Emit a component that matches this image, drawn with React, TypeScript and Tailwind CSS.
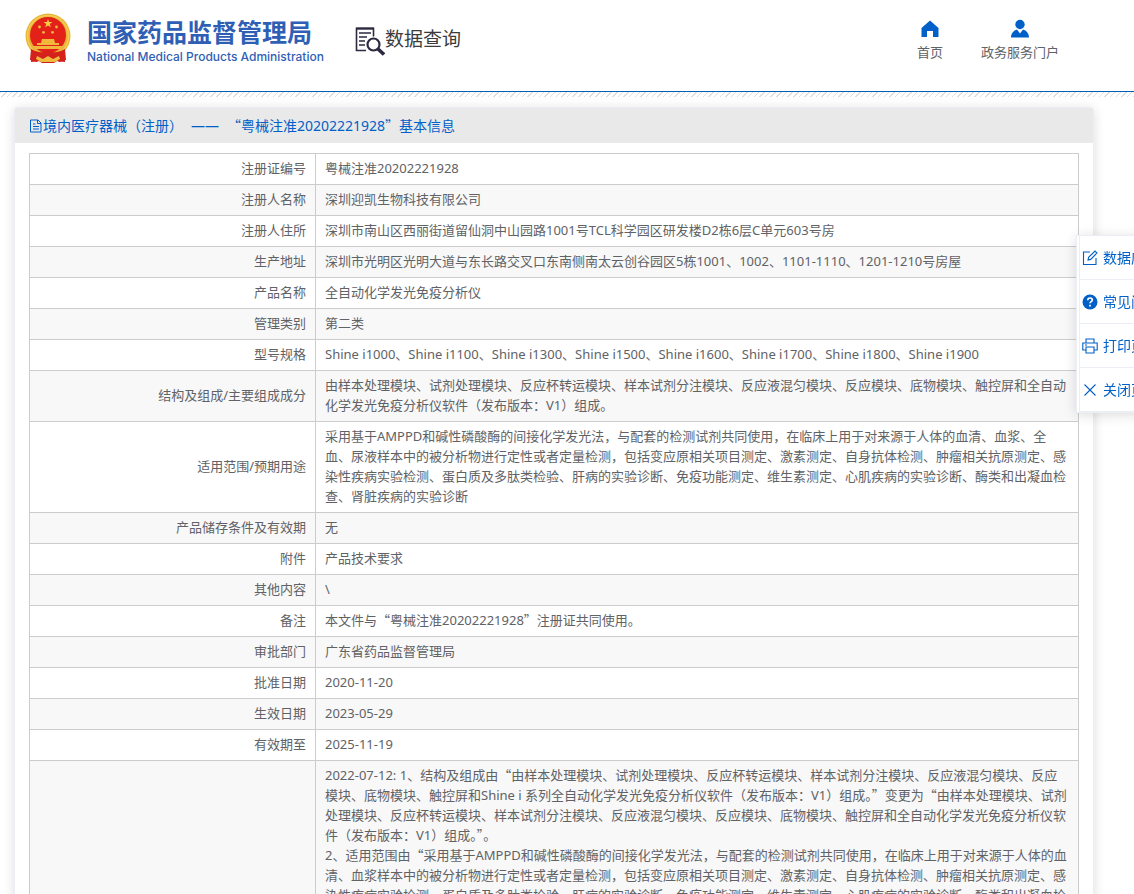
import type { ReactNode } from "react";

type Row = { label: string; value: string[] };

const SCOPE =
  "采用基于AMPPD和碱性磷酸酶的间接化学发光法，与配套的检测试剂共同使用，在临床上用于对来源于人体的血清、血浆、全血、尿液样本中的被分析物进行定性或者定量检测，包括变应原相关项目测定、激素测定、自身抗体检测、肿瘤相关抗原测定、感染性疾病实验检测、蛋白质及多肽类检验、肝病的实验诊断、免疫功能测定、维生素测定、心肌疾病的实验诊断、酶类和出凝血检查、肾脏疾病的实验诊断";

const ROWS: Row[] = [
  { label: "注册证编号", value: ["粤械注准20202221928"] },
  { label: "注册人名称", value: ["深圳迎凯生物科技有限公司"] },
  {
    label: "注册人住所",
    value: ["深圳市南山区西丽街道留仙洞中山园路1001号TCL科学园区研发楼D2栋6层C单元603号房"],
  },
  {
    label: "生产地址",
    value: ["深圳市光明区光明大道与东长路交叉口东南侧南太云创谷园区5栋1001、1002、1101-1110、1201-1210号房屋"],
  },
  { label: "产品名称", value: ["全自动化学发光免疫分析仪"] },
  { label: "管理类别", value: ["第二类"] },
  {
    label: "型号规格",
    value: [
      "Shine i1000、Shine i1100、Shine i1300、Shine i1500、Shine i1600、Shine i1700、Shine i1800、Shine i1900",
    ],
  },
  {
    label: "结构及组成/主要组成成分",
    value: [
      "由样本处理模块、试剂处理模块、反应杯转运模块、样本试剂分注模块、反应液混匀模块、反应模块、底物模块、触控屏和全自动化学发光免疫分析仪软件（发布版本：V1）组成。",
    ],
  },
  { label: "适用范围/预期用途", value: [SCOPE] },
  { label: "产品储存条件及有效期", value: ["无"] },
  { label: "附件", value: ["产品技术要求"] },
  { label: "其他内容", value: ["\\"] },
  { label: "备注", value: ["本文件与“粤械注准20202221928”注册证共同使用。"] },
  { label: "审批部门", value: ["广东省药品监督管理局"] },
  { label: "批准日期", value: ["2020-11-20"] },
  { label: "生效日期", value: ["2023-05-29"] },
  { label: "有效期至", value: ["2025-11-19"] },
  {
    label: "变更情况",
    value: [
      "2022-07-12: 1、结构及组成由“由样本处理模块、试剂处理模块、反应杯转运模块、样本试剂分注模块、反应液混匀模块、反应模块、底物模块、触控屏和Shine i 系列全自动化学发光免疫分析仪软件（发布版本：V1）组成。”变更为“由样本处理模块、试剂处理模块、反应杯转运模块、样本试剂分注模块、反应液混匀模块、反应模块、底物模块、触控屏和全自动化学发光免疫分析仪软件（发布版本：V1）组成。”。",
      "2、适用范围由“采用基于AMPPD和碱性磷酸酶的间接化学发光法，与配套的检测试剂共同使用，在临床上用于对来源于人体的血清、血浆样本中的被分析物进行定性或者定量检测，包括变应原相关项目测定、激素测定、自身抗体检测、肿瘤相关抗原测定、感染性疾病实验检测、蛋白质及多肽类检验、肝病的实验诊断、免疫功能测定、维生素测定、心肌疾病的实验诊断、酶类和出凝血检查。”变更为“" +
        SCOPE +
        "”。",
      "3、产品技术要求变更，详见附件。",
      "4、注册人住所变更。",
      "5、生产地址变更。",
    ],
  },
];

// Curly quotes take a full em in Chinese text, so they need the CJK face.
function Zh({ text }: { text: string }) {
  return (
    <>
      {text.split(/([“”])/).map((part, i) =>
        /^[“”]$/.test(part) ? (
          <span key={i} className="font-['Noto_Sans_CJK_SC',sans-serif] leading-none">
            {part}
          </span>
        ) : (
          part
        ),
      )}
    </>
  );
}

function Emblem() {
  return (
    <svg viewBox="0 0 46 50" className="h-[50px] w-[46px]" aria-hidden="true">
      <path d="M7 34h32l1 15-8-1-3 2H17l-3-2-8 1z" fill="#d0201c" />
      <circle cx="23" cy="23" r="22.5" fill="#e9b535" />
      <circle cx="23" cy="23" r="20.5" fill="none" stroke="#f3cb55" strokeWidth="1.5" />
      <circle cx="23" cy="22" r="18" fill="#e32119" />
      <path d="M23 6l1.1 3.1h3.3l-2.6 2 1 3.2-2.8-1.9-2.8 1.9 1-3.2-2.6-2h3.3z" fill="#f5c945" />
      <g fill="#f1b83c">
        <circle cx="14.5" cy="14" r="1.4" />
        <circle cx="31.5" cy="14" r="1.4" />
        <circle cx="18.5" cy="19.3" r="1.4" />
        <circle cx="27.5" cy="19.3" r="1.4" />
        <path d="M17 26h12l1 4H16zM12 30h22v2H12zM8 33h30l-2 3H10z" />
      </g>
      <path d="M6 36q8 4 12 3l5-1 5 1q4 1 12-3l1 11-6 2-6-2H17l-6 2-6-2z" fill="#d4211b" />
      <path d="M12 43l6 3 5-3 5 3 6-3 1 3-5 3H16l-5-3z" fill="#eebd3f" />
    </svg>
  );
}

function QueryIcon() {
  return (
    <svg viewBox="0 0 30 29" className="h-[29px] w-[30px]" fill="none" stroke="#2c2940" aria-hidden="true">
      <path d="M11 23.5H1.5v-22h17v8" strokeWidth="1.6" />
      <path d="M1 1.5h18" strokeWidth="2.2" />
      <path d="M4 6h12M4 10h8M4 14h6M4 18h6" strokeWidth="1.5" />
      <circle cx="18.5" cy="17.5" r="6" strokeWidth="2.2" />
      <path d="M23 22l6 5.5" strokeWidth="3.6" />
    </svg>
  );
}

function NavLink({ label, children }: { label: string; children: ReactNode }) {
  return (
    <a href="#" className="flex flex-col items-center gap-[3px] text-[13px] leading-5 text-[#606266]">
      <svg viewBox="0 0 20 20" className="h-5 w-5 fill-[#0060c8]" aria-hidden="true">
        {children}
      </svg>
      {label}
    </a>
  );
}

function SideButton({ label, children }: { label: string; children: ReactNode }) {
  return (
    <li className="border-b border-[#ebeef5]">
      <button
        type="button"
        className="flex h-[43px] w-full items-center gap-[5px] pl-[2px] text-[14px] text-[#0060c8]"
      >
        <svg
          viewBox="0 0 16 16"
          className="h-4 w-4 shrink-0"
          fill="none"
          stroke="currentColor"
          strokeWidth="1.1"
          aria-hidden="true"
        >
          {children}
        </svg>
        {label}
      </button>
    </li>
  );
}

export default function App() {
  return (
    <div
      lang="zh-CN"
      className="min-h-screen overflow-x-hidden bg-white font-['Noto_Sans','Noto_Sans_CJK_SC',sans-serif] text-[#606266]"
    >
      <header className="flex h-[92px] items-start justify-between border-b border-[#0060b8] pr-[75px] pl-[25px]">
        <div className="flex items-start pt-[13px]">
          <Emblem />
          <div className="w-[248px] pt-[3px] pl-4 text-[#2f5fb5]">
            <h1 className="font-['Noto_Sans_CJK_SC',sans-serif] text-[25px] leading-[30px] font-bold">
              国家药品监督管理局
            </h1>
            <p className="font-[Inter,sans-serif] text-[12px] leading-[22px] font-medium whitespace-nowrap">
              National Medical Products Administration
            </p>
          </div>
          <div className="flex items-start pt-[14px] pl-9">
            <QueryIcon />
            <span className="text-[19px] leading-6 text-[#3c3c3c]">数据查询</span>
          </div>
        </div>
        <nav className="flex gap-[38px] pt-[19px]">
          <NavLink label="首页">
            <path d="M10 1.5L1.5 9v9H7v-6h6v6h5.500V9z" />
          </NavLink>
          <NavLink label="政务服务门户">
            <circle cx="10" cy="5.5" r="4.7" />
            <path d="M1 18.500c0-4 2.500-7 6-8l3 4 3-4c3.500 1 6 4 6 8z" />
          </NavLink>
        </nav>
      </header>
      <div className="h-[5px] bg-[repeating-linear-gradient(135deg,#dedede_0px,#dedede_1px,#ffffff_1px,#ffffff_4px)]" />

      <main className="mt-[10px] mr-10 mb-10 ml-[14px] rounded-sm border border-[#ebeef5] bg-white shadow-[0_2px_12px_0_rgba(0,0,0,0.14)]">
        <h2 className="flex h-[35px] items-center bg-[#e9e9e9] pl-[14px] text-[14px] leading-5 text-[#0060c8]">
          <svg
            viewBox="0 0 14 14"
            className="h-[14px] w-[14px]"
            fill="none"
            stroke="currentColor"
            strokeWidth="1"
            aria-hidden="true"
          >
            <path d="M1.5 1H9l3 3v9H1.500zM8.500 1v3.500H12M4 5h2.500M4 7.500h6M4 10h6" />
          </svg>
          <span>境内医疗器械（注册）</span>
          <span className="mx-2">——</span>
          <span>
            <Zh text="“粤械注准20202221928”基本信息" />
          </span>
        </h2>
        <div className="px-[14px] py-[10px]">
          <table className="w-full table-fixed border-collapse border border-[#ccc] text-[13px] leading-5">
            <colgroup>
              <col className="w-[286px]" />
              <col />
            </colgroup>
            <tbody>
              {ROWS.map((row) => (
                <tr key={row.label} className="even:bg-[#f8f8f8]">
                  <th scope="row" className="border border-[#ccc] px-[9px] pt-1 pb-1.5 text-right font-normal">
                    {row.label}
                  </th>
                  <td className="border border-[#ccc] px-[9px] pt-1 pb-1.5">
                    {row.value.map((line) => (
                      <p key={line}>
                        <Zh text={line} />
                      </p>
                    ))}
                  </td>
                </tr>
              ))}
            </tbody>
          </table>
        </div>
      </main>

      <aside className="fixed top-[235px] right-[-42px] w-[100px] border border-[#ebeef5] bg-white pl-[2px] shadow-[0_2px_12px_0_rgba(0,0,0,0.14)]">
        <ul className="border-l border-[#ebeef5]">
          <SideButton label="数据应用">
            <path d="M8 2H1.5v12.500H14V8M6 10l.6-2.700L13 1l2 2-6.300 6.400z" />
          </SideButton>
          <SideButton label="常见问题">
            <circle cx="8" cy="8" r="7.5" fill="currentColor" stroke="none" />
            <path d="M5.8 6.200c0-3 4.500-2.800 4.500-.2 0 1.600-2.300 1.600-2.300 3.300M8 10.800v1.700" stroke="#fff" strokeWidth="1.7" />
          </SideButton>
          <SideButton label="打印页面">
            <path d="M4 5V1h8v4M4 12H.8V5h14.400v7H12M4 9h8v6H4zM3 7h2" />
          </SideButton>
          <SideButton label="关闭页面">
            <path d="M2.500 2.500l11 11M13.500 2.500l-11 11" />
          </SideButton>
        </ul>
      </aside>
    </div>
  );
}
